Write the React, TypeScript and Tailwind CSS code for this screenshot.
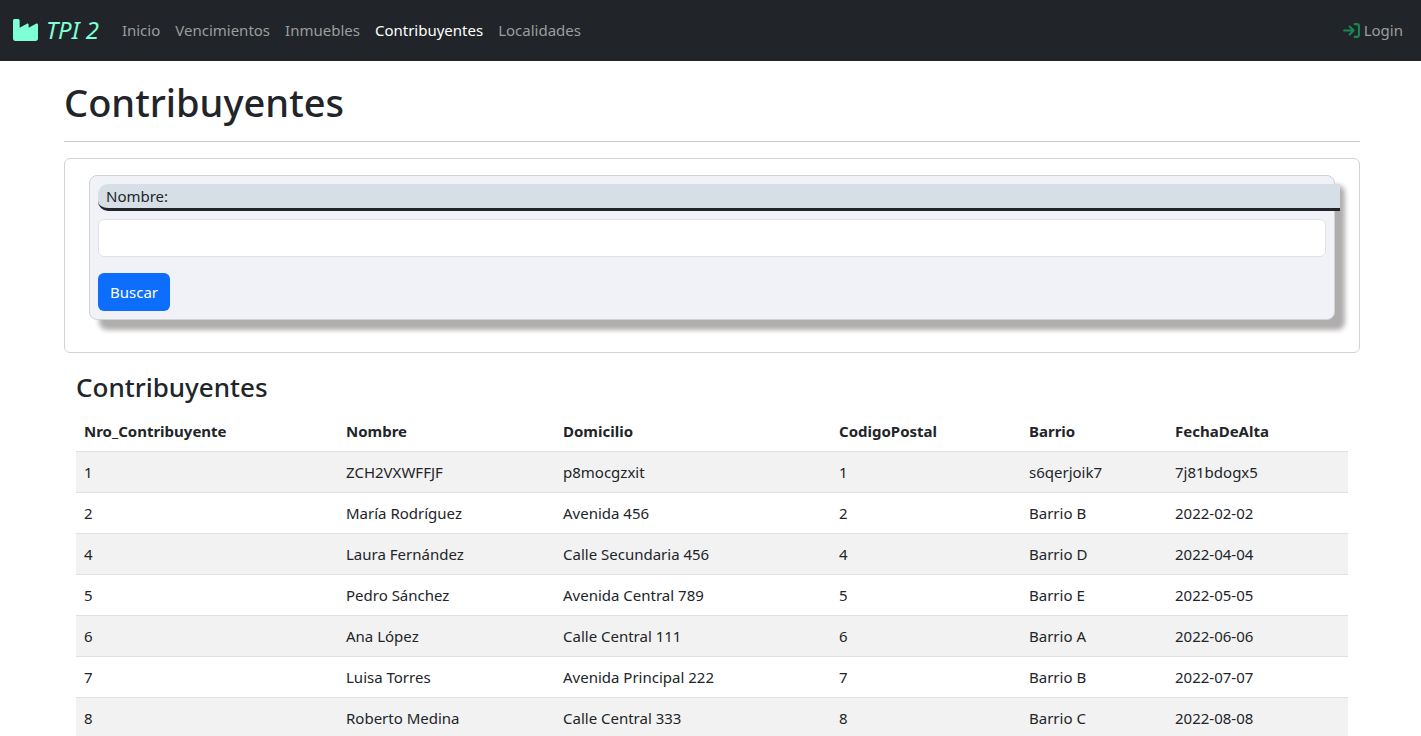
const links = ["Inicio", "Vencimientos", "Inmuebles", "Contribuyentes", "Localidades"];

const columns = [
  { title: "Nro_Contribuyente", width: "w-[262px]" },
  { title: "Nombre", width: "w-[217px]" },
  { title: "Domicilio", width: "w-[276px]" },
  { title: "CodigoPostal", width: "w-[190px]" },
  { title: "Barrio", width: "w-[146px]" },
  { title: "FechaDeAlta", width: "w-[181px]" },
];

const rows = [
  ["1", "ZCH2VXWFFJF", "p8mocgzxit", "1", "s6qerjoik7", "7j81bdogx5"],
  ["2", "María Rodríguez", "Avenida 456", "2", "Barrio B", "2022-02-02"],
  ["4", "Laura Fernández", "Calle Secundaria 456", "4", "Barrio D", "2022-04-04"],
  ["5", "Pedro Sánchez", "Avenida Central 789", "5", "Barrio E", "2022-05-05"],
  ["6", "Ana López", "Calle Central 111", "6", "Barrio A", "2022-06-06"],
  ["7", "Luisa Torres", "Avenida Principal 222", "7", "Barrio B", "2022-07-07"],
  ["8", "Roberto Medina", "Calle Central 333", "8", "Barrio C", "2022-08-08"],
];

function FactoryIcon() {
  return (
    <svg viewBox="0 0 512 448" fill="currentColor" aria-hidden="true" className="h-[22px] w-[25px]">
      <path d="M32 0h72c17.700 0 32 14.300 32 32v144l149-82c16-9 35 2 35 21v61l149-82c16-9 43 2 43 21v285c0 26.500-21.500 48-48 48H48c-26.500 0-48-21.500-48-48V32C0 14.300 14.300 0 32 0z" />
    </svg>
  );
}

function LoginIcon() {
  return (
    <svg
      viewBox="0 0 512 512"
      fill="none"
      stroke="currentColor"
      strokeWidth="62"
      strokeLinecap="round"
      strokeLinejoin="round"
      aria-hidden="true"
      className="size-[17px] text-[#198754]"
    >
      <path d="M32 256h288M200 136l120 120-120 120M352 64h64c35 0 64 29 64 64v256c0 35-29 64-64 64h-64" />
    </svg>
  );
}

function Navbar() {
  return (
    <nav className="flex h-[61px] items-center bg-[#212529] pr-[18px] pb-px pl-[13px] text-[#9b9d9e]">
      <a href="#inicio" className="mr-[23px] flex items-center gap-2 text-[24px] text-[#7fffd4] italic">
        <FactoryIcon />
        TPI 2
      </a>
      <ul className="flex flex-1 items-center gap-[15px]">
        {links.map((link) => (
          <li key={link}>
            <a
              href={"#" + link.toLowerCase()}
              className={link === "Contribuyentes" ? "text-white" : "hover:text-white"}
            >
              {link}
            </a>
          </li>
        ))}
      </ul>
      <a href="#login" className="flex items-center gap-1">
        <LoginIcon />
        Login
      </a>
    </nav>
  );
}

function SearchForm() {
  return (
    <div className="rounded-md border border-[#d3d3d4] px-6 pt-4 pb-8">
      <form
        onSubmit={(event) => event.preventDefault()}
        className="rounded-lg border border-[#d0d2d6] bg-[#f0f2f7] p-2 shadow-[10px_10px_5px_#b0adad]"
      >
        <label
          htmlFor="nombre"
          className="-mr-[14px] mb-2 block rounded-l-[10px] border-b-3 border-[#212529] bg-[#d7dfe6] pl-2"
        >
          Nombre:
        </label>
        <input
          id="nombre"
          type="text"
          className="mb-4 block h-[38px] w-full rounded-md border border-[#dee2e6] bg-white px-3"
        />
        <button type="submit" className="block h-[38px] rounded-md bg-[#0d6efd] px-3 text-white">
          Buscar
        </button>
      </form>
    </div>
  );
}

function Results() {
  return (
    <section className="px-3 pt-4">
      <h2 className="mb-1.5 text-[26px] leading-9 font-medium">Contribuyentes</h2>
      <table className="w-full table-fixed border-collapse text-left">
        <thead>
          <tr className="h-10 border-b border-[#dee2e6]">
            {columns.map((column) => (
              <th key={column.title} className={"px-2 font-bold " + column.width}>
                {column.title}
              </th>
            ))}
          </tr>
        </thead>
        <tbody>
          {rows.map((row) => (
            <tr key={row[0]} className="h-[41px] border-b border-[#dee2e6] odd:bg-[#f2f2f2]">
              {row.map((cell, index) => (
                <td key={index} className="px-2">
                  {cell}
                </td>
              ))}
            </tr>
          ))}
        </tbody>
      </table>
    </section>
  );
}

export default function App() {
  return (
    <div className="min-h-screen bg-white font-['Noto_Sans',sans-serif] text-[15px] leading-6 text-[#212529]">
      <Navbar />
      <div className="pr-[61px] pl-16">
        <main className="mx-auto max-w-[1296px] pt-4">
          <h1 className="pt-0.5 text-[38px] leading-[46px] font-medium">Contribuyentes</h1>
          <hr className="my-4 border-[#c8c9ca]" />
          <SearchForm />
          <Results />
        </main>
      </div>
    </div>
  );
}
